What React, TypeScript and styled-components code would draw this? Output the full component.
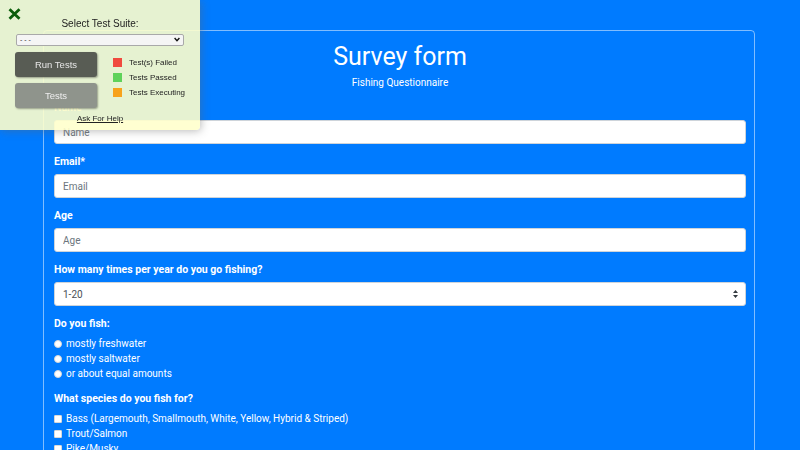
import React from 'react';
import styled, { createGlobalStyle } from 'styled-components';

const GlobalStyle = createGlobalStyle`
  html, body {
    margin: 0;
    padding: 0;
    background: #007bff;
    overflow: hidden;
  }

  body {
    font-family: "Segoe UI", Roboto, "Noto Sans", sans-serif;
    color: #fff;
  }

  * {
    box-sizing: border-box;
  }
`;

/* fcc test panel, floats over the page */
const TestPanel = styled.div`
  position: fixed;
  top: 0;
  left: 0;
  width: 200px;
  height: 130px;
  background: rgba(255, 255, 204, 0.9);
  border-bottom-right-radius: 4px;
  box-shadow: 1px 1px 8px rgba(100, 100, 100, 0.45);
  font-family: "Liberation Sans", Arial, sans-serif;
  color: #222;
  z-index: 10;
`;

const CloseIcon = styled.svg`
  position: absolute;
  top: 8px;
  left: 8px;
`;

const PanelTitle = styled.div`
  padding-top: 17px;
  text-align: center;
  font-size: 10px;
  line-height: 13px;
`;

const SuiteSelect = styled.div`
  position: relative;
  margin: 4px 16px 0;
  height: 12px;
  border: 1px solid #a9a9a9;
  border-radius: 2px;
  background: #f5f5f5;
  font-size: 7px;
  line-height: 10px;
  padding-left: 3px;
  color: #333;

  svg {
    position: absolute;
    right: 3px;
    top: 2px;
  }
`;

const PanelBody = styled.div`
  display: flex;
  margin: 6px 0 0 15px;
  gap: 16px;
`;

const ButtonColumn = styled.div`
  display: flex;
  flex-direction: column;
  gap: 6px;
`;

const PanelButton = styled.div<{ $shade: string; $ink: string }>`
  width: 82px;
  height: 25px;
  border-radius: 3px;
  background: ${(p) => p.$shade};
  color: ${(p) => p.$ink};
  font-size: 9.5px;
  display: flex;
  align-items: center;
  justify-content: center;
  box-shadow: 1px 1px 2px rgba(0, 0, 0, 0.35);
`;

const Legend = styled.div`
  display: flex;
  flex-direction: column;
  gap: 6px;
  padding-top: 6px;
`;

const LegendRow = styled.div`
  display: flex;
  align-items: center;
  gap: 7px;
  font-size: 8px;
  line-height: 9px;
`;

const Swatch = styled.span<{ $color: string }>`
  width: 9px;
  height: 9px;
  background: ${(p) => p.$color};
`;

const HelpLink = styled.div`
  margin-top: 6px;
  text-align: center;
  font-size: 8px;
  text-decoration: underline;
`;

/* survey page */
const Card = styled.main`
  width: 712px;
  margin: 30px 0 0 43px;
  border: 1px solid rgba(255, 255, 255, 0.5);
  border-radius: 4px;
  padding: 11px 8px 40px 10px;
`;

const Header = styled.header`
  text-align: center;
  margin-bottom: 10px;
`;

const Title = styled.h1`
  margin: 0 0 3px;
  font-size: 25px;
  font-weight: 400;
  line-height: 30px;
`;

const Subtitle = styled.p`
  margin: 0;
  font-size: 10px;
  line-height: 15px;
`;

const Group = styled.div`
  margin-bottom: 10px;
`;

const Label = styled.label`
  display: block;
  margin-bottom: 5px;
  font-size: 10.5px;
  line-height: 15px;
  font-weight: 700;
`;

const Field = styled.input`
  display: block;
  width: 100%;
  height: 24px;
  padding: 0 8px;
  border: 1px solid #ced4da;
  border-radius: 3px;
  background: #fff;
  font-family: inherit;
  font-size: 10px;
  color: #495057;

  &::placeholder {
    color: #6c757d;
  }
`;

const SelectWrap = styled.div`
  position: relative;

  svg {
    position: absolute;
    right: 8px;
    top: 8px;
    pointer-events: none;
  }
`;

const Select = styled.select`
  display: block;
  width: 100%;
  height: 24px;
  padding: 0 8px;
  border: 1px solid #ced4da;
  border-radius: 3px;
  background: #fff;
  font-family: inherit;
  font-size: 10px;
  color: #495057;
  appearance: none;
`;

const Choice = styled.label`
  display: flex;
  align-items: center;
  gap: 4px;
  font-size: 10px;
  line-height: 15px;
`;

const Mark = styled.input<{ $round?: boolean }>`
  appearance: none;
  margin: 0;
  width: 8px;
  height: 8px;
  background: #fff;
  border: 1px solid #d8d8d8;
  border-radius: ${(p) => (p.$round ? '50%' : '1px')};
`;

const textFields = [
  { label: 'Name*', placeholder: 'Name' },
  { label: 'Email*', placeholder: 'Email' },
  { label: 'Age', placeholder: 'Age' },
];

const waters = ['mostly freshwater', 'mostly saltwater', 'or about equal amounts'];

const species = [
  'Bass (Largemouth, Smallmouth, White, Yellow, Hybrid & Striped)',
  'Trout/Salmon',
  'Pike/Musky',
  'Walleye',
  'Catfish',
];

const legend = [
  { color: '#f04a3e', text: 'Test(s) Failed' },
  { color: '#5fd25a', text: 'Tests Passed' },
  { color: '#f7a21b', text: 'Tests Executing' },
];

export default function App() {
  return (
    <>
      <GlobalStyle />
      <TestPanel>
        <CloseIcon width="13" height="12" viewBox="0 0 13 12">
          <path d="M1.5 1.2 L11.5 10.8 M11.5 1.2 L1.5 10.8" stroke="#0b5e0b" strokeWidth="2.8" />
        </CloseIcon>
        <PanelTitle>Select Test Suite:</PanelTitle>
        <SuiteSelect>
          - - -
          <svg width="6" height="5" viewBox="0 0 6 5">
            <path d="M0.6 1 L3 3.6 L5.4 1" fill="none" stroke="#111" strokeWidth="1.4" />
          </svg>
        </SuiteSelect>
        <PanelBody>
          <ButtonColumn>
            <PanelButton $shade="#585c54" $ink="#e6e6e6">Run Tests</PanelButton>
            <PanelButton $shade="#8f948c" $ink="#eeeeee">Tests</PanelButton>
          </ButtonColumn>
          <Legend>
            {legend.map((l) => (
              <LegendRow key={l.text}>
                <Swatch $color={l.color} />
                {l.text}
              </LegendRow>
            ))}
          </Legend>
        </PanelBody>
        <HelpLink>Ask For Help</HelpLink>
      </TestPanel>

      <Card>
        <Header>
          <Title>Survey form</Title>
          <Subtitle>Fishing Questionnaire</Subtitle>
        </Header>

        {textFields.map((f) => (
          <Group key={f.placeholder}>
            <Label>{f.label}</Label>
            <Field placeholder={f.placeholder} />
          </Group>
        ))}

        <Group>
          <Label>How many times per year do you go fishing?</Label>
          <SelectWrap>
            <Select defaultValue="1-20">
              <option>1-20</option>
              <option>21-50</option>
              <option>51+</option>
            </Select>
            <svg width="5" height="8" viewBox="0 0 5 8">
              <path d="M2.5 0 L5 3 H0 Z M2.5 8 L0 5 H5 Z" fill="#343a40" />
            </svg>
          </SelectWrap>
        </Group>

        <Group>
          <Label>Do you fish:</Label>
          {waters.map((w) => (
            <Choice key={w}>
              <Mark type="radio" name="water" $round />
              {w}
            </Choice>
          ))}
        </Group>

        <Group>
          <Label>What species do you fish for?</Label>
          {species.map((s) => (
            <Choice key={s}>
              <Mark type="checkbox" />
              {s}
            </Choice>
          ))}
        </Group>
      </Card>
    </>
  );
}
